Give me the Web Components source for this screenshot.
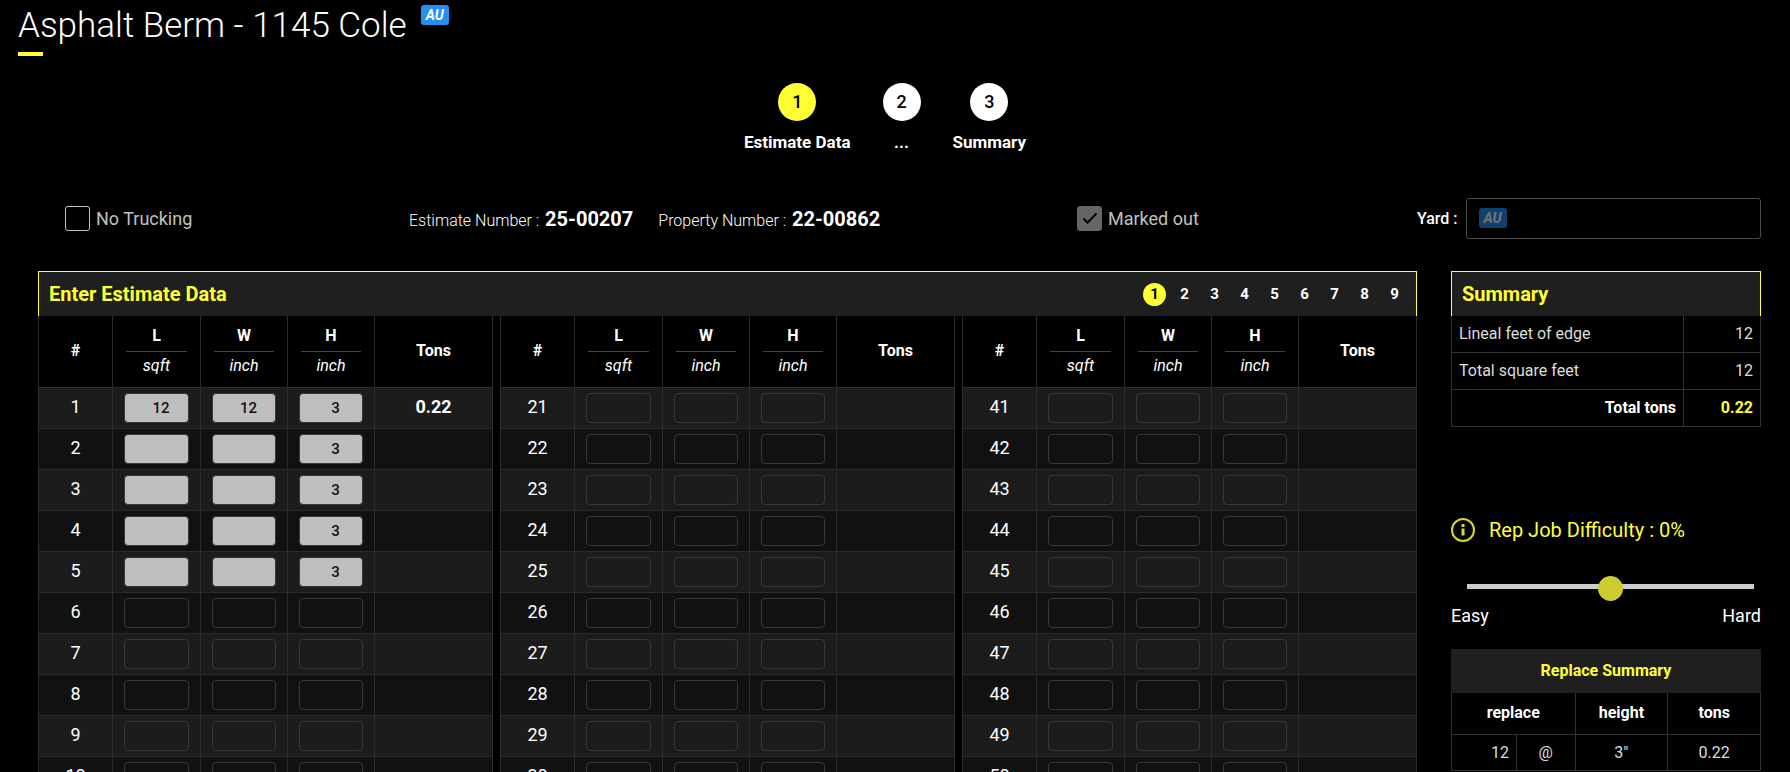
<!DOCTYPE html>
<html lang="en">
<head>
<meta charset="utf-8">
<meta name="viewport" content="width=device-width, initial-scale=1">
<title>Asphalt Berm - 1145 Cole</title>
<style>
  :root {
    --accent: #ffff33;
    --panel: #1f1f1f;
    --line: #333;
  }
  body {
    margin: 0;
    background: #000;
    color: #fff;
    font: 16px/24px Roboto, sans-serif;
  }
</style>
</head>
<body>
<estimate-app></estimate-app>

<script>
function define(name, html, setup) {
  const template = document.createElement('template');
  template.innerHTML = html;
  customElements.define(name, class extends HTMLElement {
    constructor() {
      super();
      this.attachShadow({ mode: 'open' }).append(template.content.cloneNode(true));
    }
    connectedCallback() {
      if (setup && !this.ready) {
        this.ready = true;
        setup(this, this.shadowRoot);
      }
    }
  });
}

define('tag-badge', `
<style>
  :host {
    display: block; box-sizing: border-box; width: 28px; height: 20px;
    border-radius: 3px; background: #2490f2; color: #fff;
    font-size: 14px; line-height: 20px; font-weight: 700; font-style: italic; text-align: center;
  }
  :host([dim]) { opacity: .45; }
</style>
<slot></slot>`);

define('page-title', `
<style>
  :host { display: flex; align-items: flex-start; gap: 14px; padding: 5px 0 0 18px; }
  h1 { margin: 0; font-size: 35px; line-height: 42px; font-weight: 300; white-space: nowrap; }
  h1::after { content: ""; display: block; width: 25px; height: 4px; margin-top: 5px; background: var(--accent); }
</style>
<h1><slot></slot></h1>
<slot name="badge"></slot>`);

define('wizard-step', `
<style>
  :host { display: flex; flex-direction: column; align-items: center; gap: 9px; font-size: 17px; font-weight: 700; }
  button {
    width: 38px; height: 38px; padding: 0; border: 0; border-radius: 50%;
    background: #fff; color: #000; font: inherit; font-size: 18px; font-weight: 500;
  }
  :host([current]) button { background: var(--accent); }
  span { line-height: 24px; }
</style>
<button type="button" aria-labelledby="name"></button>
<span id="name"><slot></slot></span>`,
(host, root) => { root.querySelector('button').textContent = host.getAttribute('number'); });

define('wizard-steps', `
<style>
  :host { display: flex; justify-content: center; gap: 32px; padding: 27px 20px 0 0; }
</style>
<slot></slot>`);

define('check-field', `
<style>
  :host { display: block; font-size: 18px; opacity: .75; }
  label { display: flex; align-items: center; gap: 6px; }
  .box { display: grid; }
  input, svg { grid-area: 1 / 1; width: 25px; height: 25px; margin: 0; }
  input { appearance: none; box-sizing: border-box; border: 1px solid #fff; border-radius: 3px; }
  svg { visibility: hidden; pointer-events: none; }
  input:checked { border-color: #888; background: #888; }
  input:checked + svg { visibility: visible; }
</style>
<label>
  <span class="box">
    <input type="checkbox">
    <svg viewBox="0 0 25 25" fill="none" stroke="#000" stroke-width="2"><path d="M6.5 12.5l4 4 9-9"/></svg>
  </span>
  <slot></slot>
</label>`,
(host, root) => { root.querySelector('input').checked = host.hasAttribute('checked'); });

define('number-label', `
<style>
  :host { display: block; font-size: 16px; font-weight: 300; white-space: nowrap; }
  b { margin-left: 2px; font-size: 20px; font-weight: 700; }
</style>
<slot></slot> : <b></b>`,
(host, root) => { root.querySelector('b').textContent = host.getAttribute('value'); });

define('yard-field', `
<style>
  :host { display: flex; align-items: center; gap: 8px; font-weight: 500; }
  .field { display: grid; align-items: center; flex: 1; }
  input {
    grid-area: 1 / 1; box-sizing: border-box; width: 100%; height: 41px; padding: 0 12px 0 48px;
    border: 1px solid #4a4a4a; border-radius: 3px; background: #000; color: inherit; font: inherit;
  }
  ::slotted(tag-badge) { grid-area: 1 / 1; margin: 0 0 2px 13px; }
</style>
<label for="yard">Yard :</label>
<div class="field"><input id="yard" type="text" disabled><slot></slot></div>`);

define('panel-head', `
<style>
  :host {
    display: flex; align-items: center; justify-content: space-between; box-sizing: border-box;
    height: 45px; padding: 0 10px; background: var(--panel);
    border: 1px solid var(--accent); border-bottom: 0;
  }
  h2 { margin: 0; color: var(--accent); font-size: 20px; line-height: 24px; font-weight: 700; }
</style>
<h2><slot></slot></h2>
<slot name="tools"></slot>`);

define('page-picker', `
<style>
  nav { display: flex; gap: 7px; }
  button {
    width: 23px; height: 23px; padding: 0; border: 0; border-radius: 50%; background: none;
    color: #fff; font: 700 15px/20px Roboto, sans-serif;
  }
  button[aria-current] { background: var(--accent); color: #000; }
</style>
<nav aria-label="Pages"></nav>`,
(host, root) => {
  for (let n = 1; n <= 9; n++) {
    const button = document.createElement('button');
    button.type = 'button';
    button.textContent = n;
    if (n === 1) button.setAttribute('aria-current', 'page');
    root.querySelector('nav').append(button);
  }
});

define('entry-table', `
<style>
  :host { display: block; min-width: 0; }
  table { width: 100%; table-layout: fixed; border-collapse: separate; border-spacing: 0; border-left: 1px solid #2c2c2c; }
  .index { width: 74px; }
  .length { width: 88px; }
  .size { width: 87px; }
  th, td {
    box-sizing: border-box; padding: 0 11px; text-align: center;
    border: solid #2c2c2c; border-width: 0 1px 1px 0;
  }
  thead th { height: 72px; padding-bottom: 2px; font-weight: 700; line-height: 24px; }
  thead span { display: block; padding-bottom: 3px; margin: 0 2px 2px; border-bottom: 1px solid #444; }
  i { display: block; font-weight: 400; }
  tbody th, tbody td { height: 41px; font-size: 18px; line-height: 24px; }
  tbody th { padding-bottom: 2px; font-weight: 400; }
  tbody td:last-child { padding-bottom: 2px; font-weight: 700; }
  tr:nth-child(odd) > * { background: #1c1c1c; }
  tr:nth-child(even) > * { background: #111; }
  thead tr:nth-child(odd) > * { background: #000; }
  input {
    display: block; box-sizing: border-box; width: 100%; height: 30px; padding: 0 0 0 9px;
    border: 1px solid #383838; border-radius: 4px; background: transparent; color: #111;
    font: 500 15px/20px Roboto, sans-serif; text-align: center;
  }
  input.open { background: #bfbfbf; }
</style>
<table>
  <colgroup><col class="index"><col class="length"><col class="size"><col class="size"><col></colgroup>
  <thead><tr>
    <th scope="col">#</th>
    <th scope="col"><span>L</span><i>sqft</i></th>
    <th scope="col"><span>W</span><i>inch</i></th>
    <th scope="col"><span>H</span><i>inch</i></th>
    <th scope="col">Tons</th>
  </tr></thead>
  <tbody></tbody>
</table>`,
(host, root) => {
  const first = Number(host.getAttribute('first'));
  const open = Number(host.getAttribute('open') || 0);
  const values = { 1: ['12', '12', '3', '0.22'] };
  const body = root.querySelector('tbody');
  for (let n = first; n < first + 10; n++) {
    const isOpen = n < first + open;
    const value = values[n] || ['', '', isOpen ? '3' : '', ''];
    const row = body.insertRow();
    row.innerHTML = `<th scope="row">${n}</th>` +
      ['Length', 'Width', 'Height'].map((name, i) =>
        `<td><input type="text" inputmode="numeric" class="${isOpen ? 'open' : ''}" value="${value[i]}" aria-label="${name}, row ${n}"></td>`
      ).join('') + `<td>${value[3]}</td>`;
  }
});

define('summary-table', `
<style>
  :host { display: block; }
  table { width: 100%; border-collapse: separate; border-spacing: 0; border-left: 1px solid var(--line); }
  th, td {
    box-sizing: border-box; height: 37px; padding: 0 7px; line-height: 24px;
    border: solid var(--line); border-width: 0 1px 1px 0;
  }
  th { text-align: left; font-weight: 400; color: #ddd; }
  td { width: 77px; text-align: right; color: #ddd; }
  tfoot th { text-align: right; font-weight: 700; color: #fff; }
  tfoot td { font-weight: 700; color: var(--accent); }
</style>
<table>
  <tbody>
    <tr><th scope="row">Lineal feet of edge</th><td>12</td></tr>
    <tr><th scope="row">Total square feet</th><td>12</td></tr>
  </tbody>
  <tfoot><tr><th scope="row">Total tons</th><td>0.22</td></tr></tfoot>
</table>`);

define('difficulty-slider', `
<style>
  :host { display: block; }
  label { display: flex; align-items: center; gap: 14px; color: var(--accent); font-size: 20px; line-height: 24px; }
  svg { width: 24px; height: 24px; opacity: .85; }
  input {
    appearance: none; display: block; box-sizing: border-box; width: calc(100% - 23px); height: 25px;
    margin: 32px 7px 0 16px; background: none;
  }
  input::-webkit-slider-runnable-track { height: 5px; background: #ccc; }
  input::-webkit-slider-thumb {
    appearance: none; width: 25px; height: 25px; margin-top: -8px; border-radius: 50%; background: #cccc2e;
  }
  .ends { display: flex; justify-content: space-between; margin-top: 5px; font-size: 18px; line-height: 24px; }
</style>
<label for="difficulty">
  <svg viewBox="0 0 24 24" fill="none" stroke="#ffff33" stroke-width="2" aria-hidden="true">
    <circle cx="12" cy="12" r="11"/>
    <path d="M12 6v3M12 10.500v7" stroke-width="3"/>
  </svg>
  Rep Job Difficulty : 0%
</label>
<input id="difficulty" type="range" min="-50" max="50" value="0">
<div class="ends"><span>Easy</span><span>Hard</span></div>`);

define('replace-table', `
<style>
  :host { display: block; }
  table { width: 100%; table-layout: fixed; border-collapse: separate; border-spacing: 0; border-left: 1px solid var(--line); }
  caption { height: 44px; background: var(--panel); color: var(--accent); font-weight: 700; line-height: 44px; }
  .amount { width: 21%; }
  .at { width: 19%; }
  th, td {
    box-sizing: border-box; padding: 0 7px; text-align: center; line-height: 24px;
    border: solid var(--line); border-width: 0 1px 1px 0;
  }
  th { height: 42px; padding-bottom: 2px; font-weight: 700; }
  td { height: 36px; color: #ddd; }
  td:first-child { text-align: right; }
</style>
<table>
  <caption>Replace Summary</caption>
  <colgroup><col class="amount"><col class="at"><col><col></colgroup>
  <thead><tr><th scope="colgroup" colspan="2">replace</th><th scope="col">height</th><th scope="col">tons</th></tr></thead>
  <tbody><tr><td>12</td><td>@</td><td>3"</td><td>0.22</td></tr></tbody>
</table>`);

define('estimate-app', `
<style>
  :host { display: block; height: 100vh; overflow: auto; scrollbar-width: none; }
  .facts {
    display: grid; grid-template-columns: 344fr 668fr 340fr 344fr; align-items: center;
    padding: 44px 29px 0 65px;
  }
  .numbers { display: flex; gap: 25px; padding-top: 2px; }
  .work {
    display: grid; grid-template-columns: minmax(0, 1fr) 310px; align-items: start; gap: 34px;
    padding: 32px 29px 0 38px;
  }
  .tables { display: grid; grid-template-columns: repeat(3, minmax(0, 1fr)); gap: 7px; }
  difficulty-slider { margin-top: 91px; }
  replace-table { margin-top: 21px; }
</style>
<header>
  <page-title>Asphalt Berm - 1145 Cole<tag-badge slot="badge">AU</tag-badge></page-title>
</header>
<wizard-steps>
  <wizard-step number="1" current>Estimate Data</wizard-step>
  <wizard-step number="2">...</wizard-step>
  <wizard-step number="3">Summary</wizard-step>
</wizard-steps>
<section class="facts">
  <check-field>No Trucking</check-field>
  <div class="numbers">
    <number-label value="25-00207">Estimate Number</number-label>
    <number-label value="22-00862">Property Number</number-label>
  </div>
  <check-field checked>Marked out</check-field>
  <yard-field><tag-badge dim>AU</tag-badge></yard-field>
</section>
<main class="work">
  <section>
    <panel-head>Enter Estimate Data<page-picker slot="tools"></page-picker></panel-head>
    <div class="tables">
      <entry-table first="1" open="5"></entry-table>
      <entry-table first="21"></entry-table>
      <entry-table first="41"></entry-table>
    </div>
  </section>
  <aside>
    <panel-head>Summary</panel-head>
    <summary-table></summary-table>
    <difficulty-slider></difficulty-slider>
    <replace-table></replace-table>
  </aside>
</main>`);
</script>
</body>
</html>
